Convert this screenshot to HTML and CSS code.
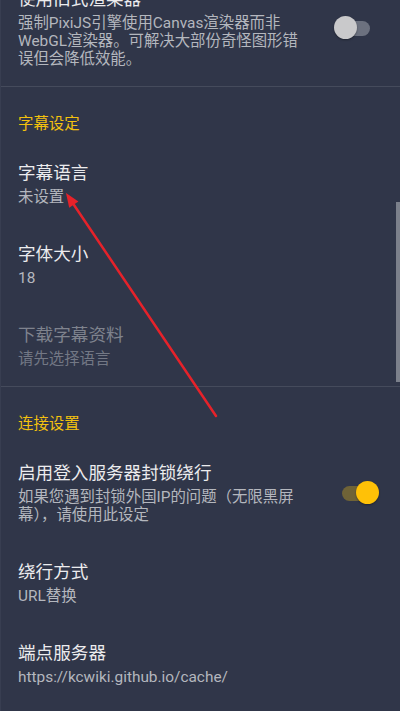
FILE: index.html
```html
<!DOCTYPE html>
<html lang="zh-CN">
<head>
<meta charset="utf-8">
<title>设置</title>
<link rel="stylesheet" href="styles.css">
</head>
<body>
<div class="screen">
  <div class="list">
    <div class="item first">
      <div class="text">
        <div class="title">使用旧式渲染器</div>
        <div class="summary">强制PixiJS引擎使用Canvas渲染器而非WebGL渲染器。可解决大部份奇怪图形错误但会降低效能。</div>
      </div>
      <div class="switch off"><span class="track"></span><span class="thumb"></span></div>
    </div>

    <div class="category">
      <div class="cat-title">字幕设定</div>
    </div>
    <div class="item">
      <div class="text">
        <div class="title">字幕语言</div>
        <div class="summary">未设置</div>
      </div>
    </div>
    <div class="item">
      <div class="text">
        <div class="title">字体大小</div>
        <div class="summary">18</div>
      </div>
    </div>
    <div class="item disabled">
      <div class="text">
        <div class="title">下载字幕资料</div>
        <div class="summary">请先选择语言</div>
      </div>
    </div>

    <div class="category">
      <div class="cat-title">连接设置</div>
    </div>
    <div class="item">
      <div class="text">
        <div class="title">启用登入服务器封锁绕行</div>
        <div class="summary">如果您遇到封锁外国IP的问题（无限黑屏幕），请使用此设定</div>
      </div>
      <div class="switch on"><span class="track"></span><span class="thumb"></span></div>
    </div>
    <div class="item">
      <div class="text">
        <div class="title">绕行方式</div>
        <div class="summary">URL替换</div>
      </div>
    </div>
    <div class="item">
      <div class="text">
        <div class="title">端点服务器</div>
        <div class="summary">https://kcwiki.github.io/cache/</div>
      </div>
    </div>
  </div>

  <div class="scrollbar"></div>

  <svg class="annotation" width="400" height="711" viewBox="0 0 400 711">
    <line x1="215" y1="416" x2="71" y2="202" stroke="#e5222a" stroke-width="2.5" stroke-linecap="round"/>
    <polygon points="65,193 68.2,207.7 77.4,201.5" fill="#e5222a"/>
  </svg>
</div>
</body>
</html>
```

FILE: styles.css
```css
html, body {
  margin: 0;
  padding: 0;
  background: #303649;
}

.screen {
  position: relative;
  width: 400px;
  height: 711px;
  overflow: hidden;
  background: #303649;
  font-family: Roboto, "Noto Sans CJK SC", sans-serif;
  border-left: 1px solid #383e51;
  box-sizing: border-box;
}

.list {
  margin-top: -31px;
  margin-left: -1px;
}

.item {
  display: flex;
  align-items: center;
  padding: 18px 21px 18px 18px;
}

.text {
  flex: 1;
  min-width: 0;
}

.title {
  font-size: 17.6px;
  line-height: 24px;
  color: #ececee;
}

.summary {
  margin-top: 3px;
  font-size: 15.4px;
  line-height: 18px;
  color: #b4b7be;
}

.disabled .title {
  color: #7f838e;
}

.disabled .summary {
  color: #737885;
}

.category {
  border-top: 1px solid #454b5c;
  padding: 27px 18px 9px;
}

.cat-title {
  font-size: 15.4px;
  line-height: 20px;
  color: #f3c10e;
}

.switch {
  position: relative;
  flex: none;
  width: 45px;
  height: 24px;
  margin-left: 28px;
}

.track {
  position: absolute;
  left: 8px;
  top: 5px;
  width: 28px;
  height: 15px;
  border-radius: 8px;
}

.thumb {
  position: absolute;
  top: 0;
  width: 23px;
  height: 23px;
  border-radius: 50%;
  box-shadow: 0 1px 2px rgba(0, 0, 0, 0.35);
}

.switch.off .track {
  background: #6c717f;
}

.switch.off .thumb {
  left: 0;
  background: #c9c9cb;
}

.switch.on .track {
  background: #6f6337;
}

.switch.on .thumb {
  left: 22px;
  background: #ffc107;
}

.scrollbar {
  position: absolute;
  right: 0;
  top: 202px;
  width: 4.5px;
  height: 180px;
  background: #7b808b;
}

.annotation {
  position: absolute;
  left: 0;
  top: 0;
  pointer-events: none;
}
```
